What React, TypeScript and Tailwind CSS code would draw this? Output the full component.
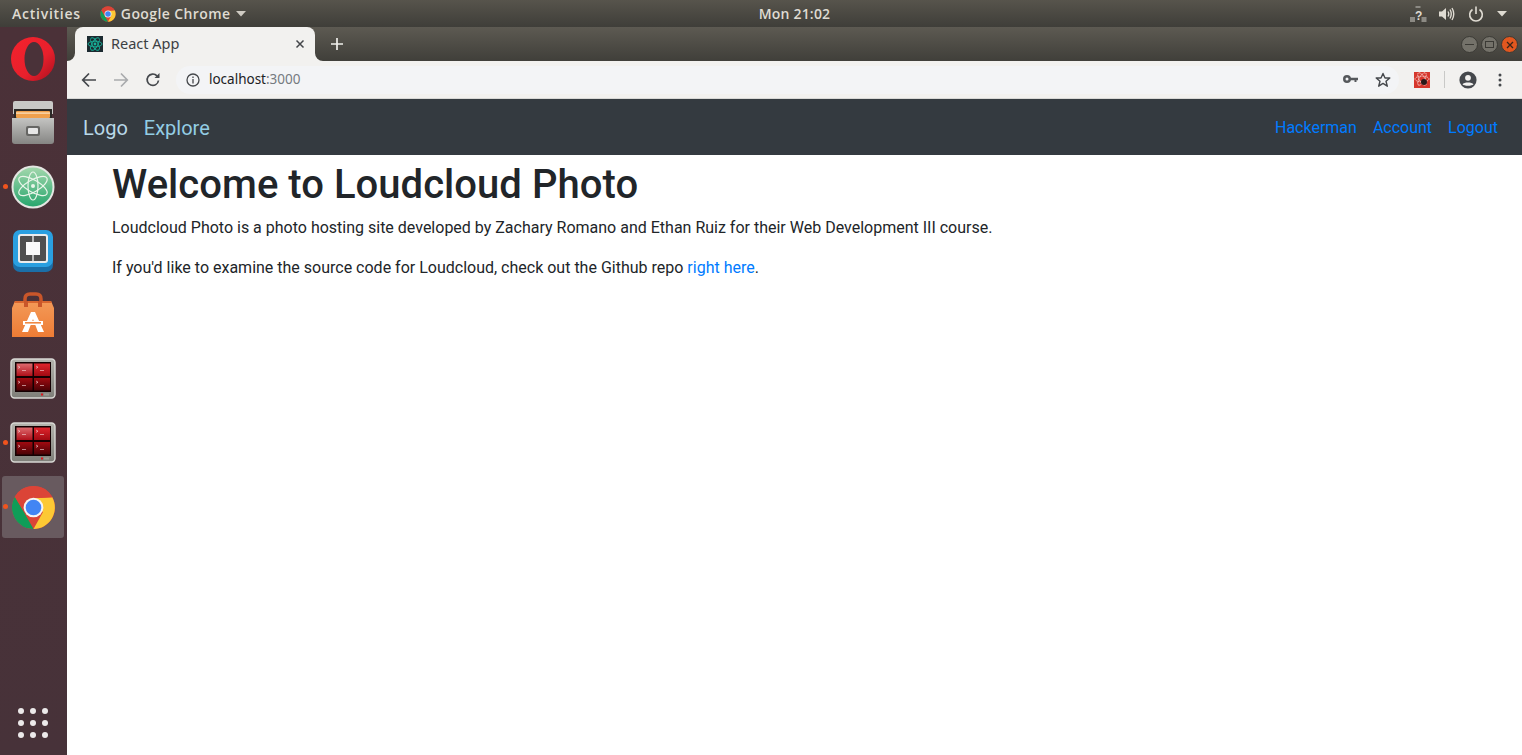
import React from "react";

const ubuntu = { fontFamily: '"Open Sans","Noto Sans",sans-serif' };

function ChromeLogo({ size }: { size: number }) {
  return (
    <svg width={size} height={size} viewBox="0 0 48 48">
      <circle cx="24" cy="24" r="23" fill="#db4437" />
      <path d="M24 47 A23 23 0 0 1 4.1 12.5 L14.5 30 L24 47Z" fill="#0f9d58" />
      <path d="M24 47 L34 29 L24 14 L44 13 A23 23 0 0 1 24 47Z" fill="#fcc934" />
      <path d="M4.1 12.5 A23 23 0 0 1 44 13 L24 14 A10 10 0 0 0 14.5 30Z" fill="#db4437" />
      <circle cx="24" cy="24" r="10.5" fill="#f5f5f5" />
      <circle cx="24" cy="24" r="8.3" fill="#4285f4" />
    </svg>
  );
}

function Opera() {
  return (
    <svg width="46" height="46" viewBox="0 0 46 46">
      <defs>
        <linearGradient id="op" x1="0" y1="0" x2="1" y2="1">
          <stop offset="0" stopColor="#f5222d" />
          <stop offset="0.6" stopColor="#e8202c" />
          <stop offset="1" stopColor="#a90f1e" />
        </linearGradient>
      </defs>
      <circle cx="23" cy="23" r="22" fill="url(#op)" />
      <ellipse cx="24" cy="23" rx="9.5" ry="17" fill="#4a3239" />
    </svg>
  );
}

function Files() {
  return (
    <svg width="46" height="46" viewBox="0 0 46 46">
      <defs>
        <linearGradient id="fl" x1="0" y1="0" x2="0" y2="1">
          <stop offset="0" stopColor="#c4c4c2" />
          <stop offset="1" stopColor="#858583" />
        </linearGradient>
      </defs>
      <path d="M5 1H41Q43 1 43 3V14H3V3Q3 1 5 1Z" fill="#c9c9c7" />
      <rect x="4" y="9" width="38" height="9" fill="#2b2927" />
      <rect x="6" y="11" width="34" height="7" rx="1" fill="#f0a04c" />
      <rect x="6" y="12.5" width="34" height="1.2" fill="#fbe3c4" />
      <path d="M2 18H44V41Q44 44 41 44H5Q2 44 2 41Z" fill="url(#fl)" />
      <rect x="16" y="26" width="14" height="10" rx="2" fill="#666664" />
      <rect x="18" y="28" width="10" height="6" rx="1" fill="#e6e6e6" />
    </svg>
  );
}

function Atom() {
  return (
    <svg width="44" height="44" viewBox="0 0 44 44">
      <defs>
        <linearGradient id="at" x1="0" y1="0" x2="0" y2="1">
          <stop offset="0" stopColor="#a4d8ad" />
          <stop offset="1" stopColor="#25a56c" />
        </linearGradient>
      </defs>
      <circle cx="22" cy="22" r="20.5" fill="url(#at)" stroke="#e4e6e2" strokeWidth="2" />
      <g fill="none" stroke="#e9f5e9" strokeWidth="1.2">
        <ellipse cx="22" cy="21" rx="16" ry="6" transform="rotate(30 22 21)" />
        <ellipse cx="22" cy="21" rx="16" ry="6" transform="rotate(-30 22 21)" />
        <ellipse cx="22" cy="21" rx="14" ry="5" transform="rotate(90 22 21)" />
      </g>
      <circle cx="22" cy="21" r="2" fill="#e9f5e9" />
    </svg>
  );
}

function Brackets() {
  return (
    <svg width="42" height="42" viewBox="0 0 42 42">
      <rect x="1" y="2" width="40" height="40" rx="7" fill="#1b6fa8" />
      <rect x="1" y="0" width="40" height="37" rx="7" fill="#2a9fe0" />
      <rect x="6" y="4" width="30" height="29" rx="3" fill="#ececec" />
      <rect x="8" y="6" width="26" height="25" rx="1" fill="#4f4f4f" />
      <rect x="14" y="12" width="14" height="13" fill="#fafafa" />
      <rect x="20" y="6" width="2" height="6" fill="#b8b8b8" />
      <rect x="20" y="25" width="2" height="6" fill="#b8b8b8" />
    </svg>
  );
}

function Store() {
  return (
    <svg width="44" height="46" viewBox="0 0 44 46">
      <defs>
        <linearGradient id="st" x1="0" y1="0" x2="0" y2="1">
          <stop offset="0" stopColor="#f39a58" />
          <stop offset="1" stopColor="#ee7c35" />
        </linearGradient>
      </defs>
      <path d="M14 15 V7 Q14 2 19 2 H25 Q30 2 30 7 V15" fill="none" stroke="#c9562a" strokeWidth="3.5" />
      <path d="M4 9 H40 L43 16 V45 H1 V16Z" fill="url(#st)" />
      <path d="M4 9 H40 L41 11 H3Z" fill="#d8662f" />
      <path d="M13 9 H17 V15 H13Z M27 9 H31 V15 H27Z" fill="#c9562a" />
      <path d="M20 20 H24 L33 40 H27 L22 27 L17 40 H11Z" fill="#fff" />
      <rect x="12" y="29" width="20" height="4" fill="#fff" />
      <rect x="14" y="30" width="16" height="1.6" fill="#f08a45" />
    </svg>
  );
}

function Terminator({ id }: { id: string }) {
  return (
    <svg width="46" height="42" viewBox="0 0 46 42">
      <defs>
        <linearGradient id={`${id}a`} x1="0" y1="0" x2="0" y2="1">
          <stop offset="0" stopColor="#de6a6e" />
          <stop offset="1" stopColor="#b0101a" />
        </linearGradient>
        <linearGradient id={`${id}b`} x1="0" y1="0" x2="0" y2="1">
          <stop offset="0" stopColor="#e0242c" />
          <stop offset="1" stopColor="#a00a12" />
        </linearGradient>
        <linearGradient id={`${id}c`} x1="0" y1="0" x2="0" y2="1">
          <stop offset="0" stopColor="#a00a10" />
          <stop offset="1" stopColor="#4a0206" />
        </linearGradient>
        <linearGradient id={`${id}f`} x1="0" y1="0" x2="0" y2="1">
          <stop offset="0" stopColor="#b4b4ae" />
          <stop offset="1" stopColor="#7e7e78" />
        </linearGradient>
      </defs>
      <rect x="1" y="1" width="44" height="39" rx="3.5" fill={`url(#${id}f)`} stroke="#d8d8d4" strokeWidth="1.4" />
      <rect x="5" y="4" width="36" height="30" fill="#140002" />
      <rect x="6.5" y="5.5" width="16" height="12.5" fill={`url(#${id}a)`} />
      <rect x="24" y="5.5" width="16" height="12.5" fill={`url(#${id}b)`} />
      <rect x="6.5" y="20" width="16" height="12.5" fill={`url(#${id}c)`} />
      <rect x="24" y="20" width="16" height="12.5" fill={`url(#${id}c)`} />
      <g fill="none" stroke="#f5dede" strokeWidth="0.6">
        <path d="M8 8 L10 9.2 L8 10.4 M12 12.5 H16" />
        <path d="M26 8 L28 9.2 L26 10.4 M30 12.5 H34" />
        <path d="M8 23 L10 24.2 L8 25.4 M12 27.5 H16" />
        <path d="M26 23 L28 24.2 L26 25.4 M30 27.5 H34" />
      </g>
      <rect x="31" y="35.5" width="2" height="2" fill="#e0141c" />
      <rect x="34" y="35.5" width="5" height="2" fill="#9a9a94" />
    </svg>
  );
}

function DockItem({ children, dot, active }: { children: React.ReactNode; dot?: boolean; active?: boolean }) {
  return (
    <div className="h-[64px] py-px pl-[2px] pr-[3px]">
      <div className={`relative flex h-[62px] w-[62px] items-center justify-center rounded-[3px] ${active ? "bg-[#685a5f]" : ""}`}>
        {children}
        {dot && <span className="absolute left-[0.5px] top-[28px] h-[5px] w-[5px] rounded-full bg-[#f0541e]" />}
      </div>
    </div>
  );
}

function Dock() {
  return (
    <aside className="flex w-[67px] shrink-0 flex-col bg-gradient-to-b from-[#4b3138] to-[#473239]">
      <DockItem><Opera /></DockItem>
      <DockItem><Files /></DockItem>
      <DockItem dot><Atom /></DockItem>
      <DockItem><Brackets /></DockItem>
      <DockItem><Store /></DockItem>
      <DockItem><Terminator id="ta" /></DockItem>
      <DockItem dot><Terminator id="tb" /></DockItem>
      <DockItem dot active><ChromeLogo size={45} /></DockItem>
      <div className="mt-auto mb-[17px] ml-[18px] grid w-[30px] grid-cols-3 gap-[6px]">
        {Array.from({ length: 9 }).map((_, i) => (
          <span key={i} className="h-[6px] w-[6px] rounded-full bg-[#ece9ea]" />
        ))}
      </div>
    </aside>
  );
}

function TopBar() {
  return (
    <header className="flex h-[27px] shrink-0 items-center bg-gradient-to-b from-[#57544c] to-[#3f3e39] text-[#dfdbd2]" style={ubuntu}>
      <div className="flex flex-1 items-center text-[14px] font-semibold">
        <span className="ml-[12px] tracking-[0.75px]">Activities</span>
        <span className="ml-[19px] mr-[5px] flex"><ChromeLogo size={16} /></span>
        <span className="tracking-[0.4px]">Google Chrome</span>
        <svg className="ml-[6px]" width="10" height="6" viewBox="0 0 10 6"><path d="M0 0H10L5 5.5Z" fill="#cfcbc3" /></svg>
      </div>
      <span className="ml-[82px] text-[14px] font-semibold tracking-[0.2px]">Mon 21:02</span>
      <div className="flex flex-1 items-center justify-end pr-[15px]">
        <svg width="17" height="16" viewBox="0 0 17 16" fill="#8c8a84">
          <rect x="0" y="11" width="5" height="5" /><rect x="11.5" y="11" width="5" height="5" />
          <rect x="5.5" y="0" width="5" height="2" />
          <text x="5" y="14" fontSize="12" fontWeight="700" fill="#dfdbd2" fontFamily="Liberation Sans">?</text>
        </svg>
        <svg className="ml-[12px]" width="16" height="16" viewBox="0 0 16 16" fill="none" stroke="#dfdbd2">
          <path d="M0 5.5H3L7 2V14L3 10.5H0Z" fill="#dfdbd2" stroke="none" />
          <path d="M9 5.5Q10.5 8 9 10.5M11 3.5Q13.5 8 11 12.5M13 2Q16.5 8 13 14" strokeWidth="1.4" />
        </svg>
        <svg className="ml-[13px]" width="16" height="16" viewBox="0 0 16 16" fill="none" stroke="#dfdbd2" strokeWidth="1.6">
          <path d="M4.5 3.5A6.3 6.3 0 1 0 11.5 3.5" /><path d="M8 0.5V8" />
        </svg>
        <svg className="ml-[13px]" width="10" height="6" viewBox="0 0 10 6"><path d="M0 0H10L5 5.5Z" fill="#dfdbd2" /></svg>
      </div>
    </header>
  );
}

function WinBtn({ children, close }: { children: React.ReactNode; close?: boolean }) {
  return (
    <span className={`flex h-[17px] w-[17px] items-center justify-center rounded-full border border-[#3b3a35] ${close ? "bg-[#e2571f]" : "bg-[#74726a]"}`}>
      {children}
    </span>
  );
}

function TabStrip() {
  return (
    <div className="flex h-[34px] shrink-0 items-end bg-gradient-to-b from-[#5d5a52] to-[#403f3a] pl-[8px]">
      <div className="relative flex h-[34px] w-[240px] items-center rounded-t-[8px] bg-[#f2f1ef] pl-[12px] pr-[10px]">
        <svg className="absolute -left-[8px] bottom-0" width="8" height="8" viewBox="0 0 8 8"><path d="M8 0V8H0A8 8 0 0 0 8 0Z" fill="#f2f1ef" /></svg>
        <svg className="absolute -right-[8px] bottom-0" width="8" height="8" viewBox="0 0 8 8"><path d="M0 0V8H8A8 8 0 0 1 0 0Z" fill="#f2f1ef" /></svg>
        <svg width="16" height="16" viewBox="0 0 16 16">
          <rect width="16" height="16" fill="#1c2a30" />
          <g fill="none" stroke="#16b39a" strokeWidth="0.9">
            <ellipse cx="8" cy="8" rx="7" ry="2.8" />
            <ellipse cx="8" cy="8" rx="7" ry="2.8" transform="rotate(60 8 8)" />
            <ellipse cx="8" cy="8" rx="7" ry="2.8" transform="rotate(120 8 8)" />
          </g>
          <circle cx="8" cy="8" r="1.4" fill="#16b39a" />
        </svg>
        <span className="ml-[8px] flex-1 text-[14.5px] text-[#3c4043]" style={{ fontFamily: '"Noto Sans",sans-serif' }}>React App</span>
        <svg width="10" height="10" viewBox="0 0 10 10" stroke="#44464a" strokeWidth="1.5"><path d="M1.5 1.5L8.5 8.5M8.5 1.5L1.5 8.5" /></svg>
      </div>
      <svg className="mb-[11px] ml-[16px]" width="12" height="12" viewBox="0 0 12 12" stroke="#f0efec" strokeWidth="1.7"><path d="M6 0V12M0 6H12" /></svg>
      <div className="mb-[8px] ml-auto mr-[4px] flex gap-[3px]">
        <WinBtn><span className="h-px w-[9px] bg-[#3b3a35]" /></WinBtn>
        <WinBtn><span className="h-[7px] w-[9px] border border-[#3b3a35]" /></WinBtn>
        <WinBtn close>
          <svg width="8" height="8" viewBox="0 0 8 8" stroke="#3b2418" strokeWidth="1.3"><path d="M1 1L7 7M7 1L1 7" /></svg>
        </WinBtn>
      </div>
    </div>
  );
}

function Toolbar() {
  return (
    <div className="flex h-[38px] shrink-0 items-center border-b border-[#d8d8d6] bg-[#f2f1ef] pl-[14px] pr-[20px]">
      <svg width="16" height="16" viewBox="0 0 16 16" fill="none" stroke="#45484c" strokeWidth="1.7"><path d="M15 8H2M8 1.5L1.7 8L8 14.5" /></svg>
      <svg className="ml-[16px]" width="16" height="16" viewBox="0 0 16 16" fill="none" stroke="#a9abad" strokeWidth="1.7"><path d="M1 8H14M8 1.5L14.3 8L8 14.5" /></svg>
      <svg className="ml-[16px]" width="16" height="16" viewBox="0 0 16 16" fill="none" stroke="#45484c" strokeWidth="1.7"><path d="M13.5 8.5A5.7 5.7 0 1 1 12 3.8" /><path d="M14.5 1V6H9.5Z" fill="#45484c" stroke="none" /></svg>
      <div className="ml-[15px] flex h-[28px] w-[1224px] items-center rounded-full bg-[#f3f4f6] pl-[10px] pr-[8px]">
        <svg width="14" height="14" viewBox="0 0 14 14" fill="none" stroke="#45484c" strokeWidth="1.3">
          <circle cx="7" cy="7" r="6" /><path d="M7 6V10.5M7 3.5V5" />
        </svg>
        <span className="ml-[9px] text-[13.5px] text-[#202124]" style={{ fontFamily: '"Noto Sans",sans-serif' }}>
          localhost<span className="text-[#757a80]">:3000</span>
        </span>
        <svg className="ml-auto" width="15" height="9" viewBox="0 0 15 9" fill="#55585c">
          <path d="M4 0A4 4 0 1 1 4 8A4 4 0 0 1 4 0ZM4 2.5A1.5 1.5 0 1 0 4 5.5A1.5 1.5 0 0 0 4 2.5Z" fillRule="evenodd" />
          <path d="M7 2.8H15V5.2H13.5V7H11.5V5.2H7Z" />
        </svg>
        <svg className="ml-[17px]" width="16" height="16" viewBox="0 0 16 16" fill="none" stroke="#45484c" strokeWidth="1.4" strokeLinejoin="round"><path d="M8 1.5L10 6H14.8L11 9.2L12.3 14.2L8 11.4L3.7 14.2L5 9.2L1.2 6H6Z" /></svg>
      </div>
      <svg className="ml-[15px]" width="16" height="16" viewBox="0 0 16 16">
        <rect width="16" height="16" fill="#d6372c" />
        <g fill="none" stroke="#fbe3e0" strokeWidth="0.8" strokeDasharray="1.2 0.6">
          <ellipse cx="8" cy="7" rx="7" ry="2.8" />
          <ellipse cx="8" cy="7" rx="7" ry="2.8" transform="rotate(60 8 7)" />
          <ellipse cx="8" cy="7" rx="7" ry="2.8" transform="rotate(120 8 7)" />
        </g>
        <circle cx="10" cy="10" r="3" fill="#2a1a1a" />
      </svg>
      <span className="ml-[14px] h-[17px] w-px bg-[#c9c9c7]" />
      <svg className="ml-[14px]" width="18" height="18" viewBox="0 0 18 18">
        <circle cx="9" cy="9" r="8.6" fill="#45484c" />
        <circle cx="9" cy="6.8" r="2.9" fill="#f2f1ef" />
        <path d="M3.5 13.2C5 10.8 13 10.8 14.5 13.2C13 15.2 5 15.2 3.5 13.2Z" fill="#f2f1ef" />
      </svg>
      <svg className="ml-[21px]" width="4" height="14" viewBox="0 0 4 14" fill="#45484c">
        <circle cx="2" cy="2" r="1.5" /><circle cx="2" cy="7" r="1.5" /><circle cx="2" cy="12" r="1.5" />
      </svg>
    </div>
  );
}

function Navbar() {
  return (
    <nav className="flex h-[56px] shrink-0 items-center bg-[#343a40] pl-[16px] pr-[24px] pt-[2px]" style={{ fontFamily: "Roboto,sans-serif" }}>
      <a className="text-[20px] text-[#b8d8e8]">Logo</a>
      <a className="ml-[16px] text-[20px] text-[#93cde4]">Explore</a>
      <div className="ml-auto flex gap-[16px] text-[16px] text-[#007bff]">
        <a>Hackerman</a>
        <a>Account</a>
        <a>Logout</a>
      </div>
    </nav>
  );
}

export default function App() {
  return (
    <div className="flex h-[755px] w-[1522px] flex-col overflow-hidden bg-white">
      <TopBar />
      <div className="flex min-h-0 flex-1">
        <Dock />
        <main className="flex min-w-0 flex-1 flex-col">
          <TabStrip />
          <Toolbar />
          <Navbar />
          <section className="pl-[45px] text-[16px] leading-[24px] text-[#212529]" style={{ fontFamily: "Roboto,sans-serif" }}>
            <h1 className="mb-[7px] mt-[6px] text-[40px] font-medium leading-[48px] tracking-[0.04px]">Welcome to Loudcloud Photo</h1>
            <p className="mb-[16px]">Loudcloud Photo is a photo hosting site developed by Zachary Romano and Ethan Ruiz for their Web Development III course.</p>
            <p>If you'd like to examine the source code for Loudcloud, check out the Github repo <a className="text-[#007bff]">right here</a>.</p>
          </section>
        </main>
      </div>
    </div>
  );
}
